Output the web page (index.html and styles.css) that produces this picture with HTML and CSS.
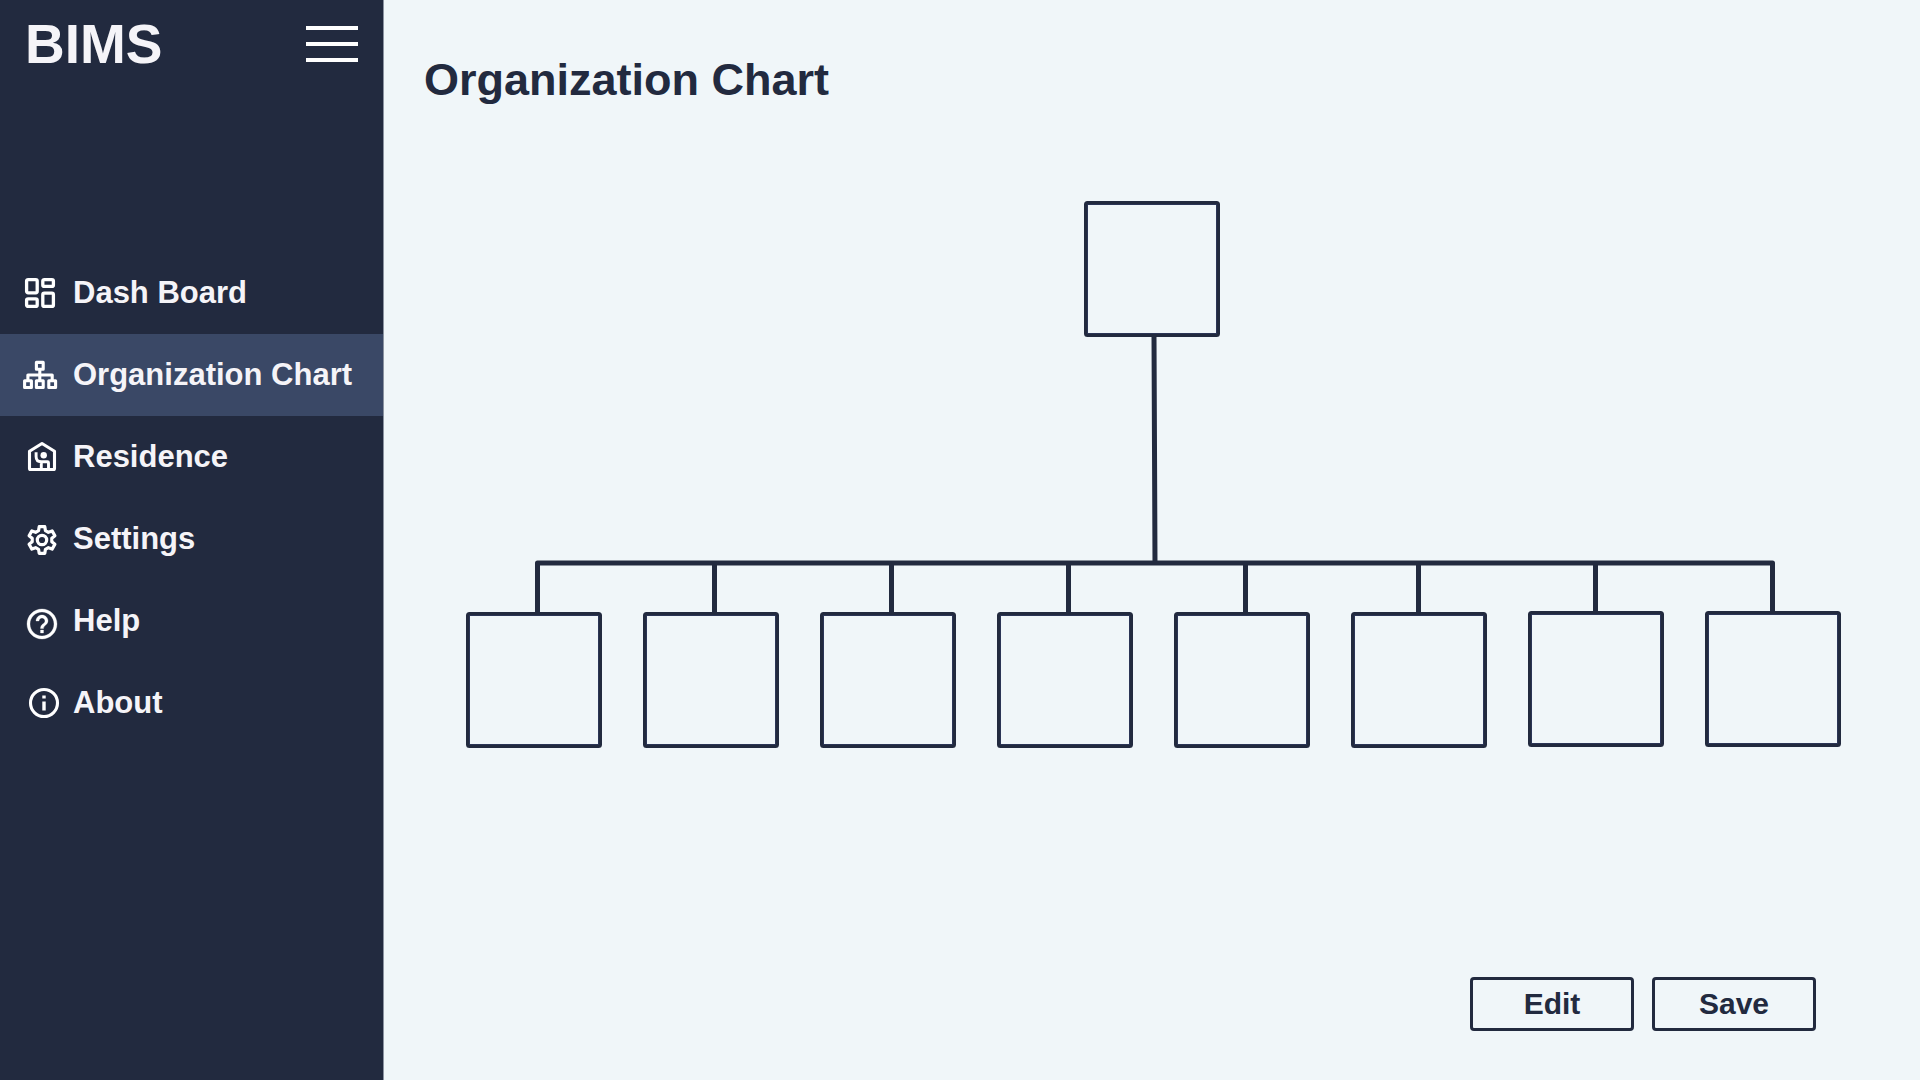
FILE: index.html
```html
<!DOCTYPE html>
<html lang="en">
<head>
<meta charset="utf-8">
<meta name="viewport" content="width=device-width, initial-scale=1">
<title>BIMS</title>
<link rel="stylesheet" href="styles.css">
</head>
<body>
<div class="layout">
  <aside class="sidebar">
    <header class="brand">
      <span class="brand-name">BIMS</span>
      <button class="menu-toggle" type="button" aria-label="Menu">
        <span class="bar"></span><span class="bar"></span><span class="bar"></span>
      </button>
    </header>
    <nav class="nav">
      <a class="nav-item" href="#dashboard">
        <svg class="icon" viewBox="0 0 38 38" aria-hidden="true">
          <g fill="none" stroke="currentColor" stroke-width="3.3">
            <rect x="3.6" y="5.6" width="10.6" height="13.2" rx="1.5"/>
            <rect x="19.8" y="5.6" width="10.6" height="6.8" rx="1.5"/>
            <rect x="3.6" y="24.8" width="10.6" height="7.6" rx="1.5"/>
            <rect x="19.8" y="19.2" width="10.6" height="13.2" rx="1.5"/>
          </g>
        </svg>
        <span>Dash Board</span>
      </a>
      <a class="nav-item active" href="#organization" aria-current="page">
        <svg class="icon" viewBox="0 0 38 38" aria-hidden="true">
          <g fill="none" stroke="currentColor" stroke-width="3.1" stroke-linejoin="round">
            <rect x="13.4" y="6.4" width="6.8" height="6.8"/>
            <rect x="1.6" y="24.7" width="6.8" height="6.8"/>
            <rect x="13.4" y="24.7" width="6.8" height="6.8"/>
            <rect x="25.8" y="24.7" width="6.8" height="6.8"/>
            <path d="M16.8 13v11.500M4.900 24.500V19h24.300v5.500"/>
          </g>
        </svg>
        <span>Organization Chart</span>
      </a>
      <a class="nav-item" href="#residence">
        <svg class="icon" viewBox="0 0 38 38" aria-hidden="true">
          <g fill="none" stroke="currentColor" stroke-width="3.1" stroke-linejoin="round">
            <path d="M6.500 13.200L19 5.500l12.500 7.700v17.300q0 1-1 1H7.500q-1 0-1-1z"/>
            <path stroke-width="2.900" d="M13.100 14.300v4.200q0 5.300 5.200 5.300h6.200q1 0 1 1V31M18.300 23.800V31"/>
          </g>
          <circle cx="20.700" cy="17.300" r="3.200" fill="currentColor"/>
        </svg>
        <span>Residence</span>
      </a>
      <a class="nav-item" href="#settings">
        <svg class="icon" viewBox="0 0 38 38" aria-hidden="true">
          <g fill="none" stroke="currentColor" stroke-width="3.200" transform="translate(19 20)">
            <circle r="4.700"/>
            <path stroke-linejoin="round" d="M-3.400-9.400L-2.800-13.300H2.800L3.400-9.400L6.400-7.700L10.100-9.100L12.900-4.200L9.800-1.700V1.700L12.900 4.200L10.100 9.100L6.400 7.700L3.400 9.400L2.800 13.300H-2.800L-3.400 9.400L-6.400 7.700L-10.100 9.100L-12.900 4.200L-9.800 1.700V-1.700L-12.900-4.200L-10.100-9.100L-6.400-7.700Z"/>
          </g>
        </svg>
        <span>Settings</span>
      </a>
      <a class="nav-item" href="#help">
        <svg class="icon" viewBox="0 0 38 38" aria-hidden="true">
          <path fill="currentColor" stroke="currentColor" stroke-width=".2" transform="translate(1 4) scale(1.5)" d="M11 18h2v-2h-2v2zm1-16C6.480 2 2 6.480 2 12s4.480 10 10 10 10-4.480 10-10S17.520 2 12 2zm0 18c-4.410 0-8-3.590-8-8s3.590-8 8-8 8 3.590 8 8-3.590 8-8 8zm0-14c-2.210 0-4 1.790-4 4h2c0-1.100.9-2 2-2s2 .9 2 2c0 2-3 1.750-3 5h2c0-2.250 3-2.500 3-5 0-2.210-1.790-4-4-4z"/>
        </svg>
        <span>Help</span>
      </a>
      <a class="nav-item" href="#about">
        <svg class="icon" viewBox="0 0 38 38" aria-hidden="true">
          <circle cx="21" cy="19" r="13.500" fill="none" stroke="currentColor" stroke-width="3.100"/>
          <path fill="currentColor" d="M19.300 11.400h3.400v3.200h-3.400zM19.300 17.400h3.400v9.200h-3.400z"/>
        </svg>
        <span>About</span>
      </a>
    </nav>
  </aside>

  <main class="content">
    <h1 class="title">Organization Chart</h1>
    <svg class="chart" viewBox="0 0 1375 547" role="img" aria-label="Organization chart: one position above eight">
      <defs>
        <g id="node">
          <rect class="node-inner" x="3.500" y="3.500" width="129" height="129"/>
          <rect class="node-outer" x="1.500" y="1.500" width="133" height="133" rx="2"/>
        </g>
      </defs>
      <path class="link" d="M688 135L689 362M71.500 413V362H1306.500V413M248.500 362V413M425.500 362V413M602.500 362V413M779.500 362V413M952.500 362V413M1129.500 362V413"/>
      <use href="#node" x="618" y="0"/>
      <use href="#node" x="0" y="411"/>
      <use href="#node" x="177" y="411"/>
      <use href="#node" x="354" y="411"/>
      <use href="#node" x="531" y="411"/>
      <use href="#node" x="708" y="411"/>
      <use href="#node" x="885" y="411"/>
      <use href="#node" x="1062" y="410"/>
      <use href="#node" x="1239" y="410"/>
    </svg>
    <div class="actions">
      <button class="btn" type="button">Edit</button>
      <button class="btn" type="button">Save</button>
    </div>
  </main>
</div>
</body>
</html>
```

FILE: styles.css
```css
:root {
  --navy: #222a3f;
  --active: #3a4866;
  --page: #f0f6f9;
  --light: #f5f4f8;
}

* {
  box-sizing: border-box;
}

body {
  margin: 0;
  background: var(--page);
  color: var(--navy);
  font-family: "Arial Rounded MT Bold", "Liberation Sans", Arial, sans-serif;
  font-weight: 700;
}

.layout {
  display: flex;
  min-height: 100vh;
}

.sidebar {
  flex: 0 0 384px;
  background: var(--navy);
  border-right: 1px solid #8b93a1;
  color: var(--light);
}

.brand {
  display: flex;
  align-items: center;
  justify-content: space-between;
  height: 88px;
  padding: 0 25px;
}

.brand-name {
  font-size: 55px;
  line-height: 64px;
}

.menu-toggle {
  display: flex;
  flex-direction: column;
  gap: 12px;
  width: 52px;
  padding: 0;
  border: 0;
  background: none;
  cursor: pointer;
}

.bar {
  height: 4px;
  background: #fff;
}

.nav {
  margin-top: 164px;
}

.nav-item {
  display: flex;
  align-items: center;
  gap: 12px;
  height: 82px;
  padding-left: 23px;
  color: inherit;
  font-size: 31px;
  line-height: 40px;
  text-decoration: none;
  white-space: nowrap;
}

.nav-item.active {
  background: var(--active);
}

.icon {
  flex: none;
  width: 38px;
  height: 38px;
  color: #fff;
}

.content {
  display: flex;
  flex: 1;
  flex-direction: column;
  min-width: 0;
  padding: 52px 79px 49px 82px;
}

.title {
  margin: 0 0 93px -42px;
  font-size: 45px;
  line-height: 56px;
}

.chart {
  display: block;
  width: 100%;
  height: auto;
}

.link {
  fill: none;
  stroke: var(--navy);
  stroke-width: 5;
  stroke-linejoin: round;
}

.node-outer {
  fill: none;
  stroke: var(--navy);
  stroke-width: 3;
}

.node-inner {
  fill: var(--page);
  stroke: #2b3556;
  stroke-width: 1;
}

.actions {
  display: flex;
  justify-content: flex-end;
  gap: 18px;
  margin-top: auto;
  padding: 24px 25px 0 0;
}

.btn {
  width: 164px;
  height: 54px;
  padding: 0;
  border: 3px solid var(--navy);
  border-radius: 4px;
  background: var(--page);
  color: inherit;
  font: inherit;
  font-size: 30px;
  line-height: 40px;
  cursor: pointer;
}
```
